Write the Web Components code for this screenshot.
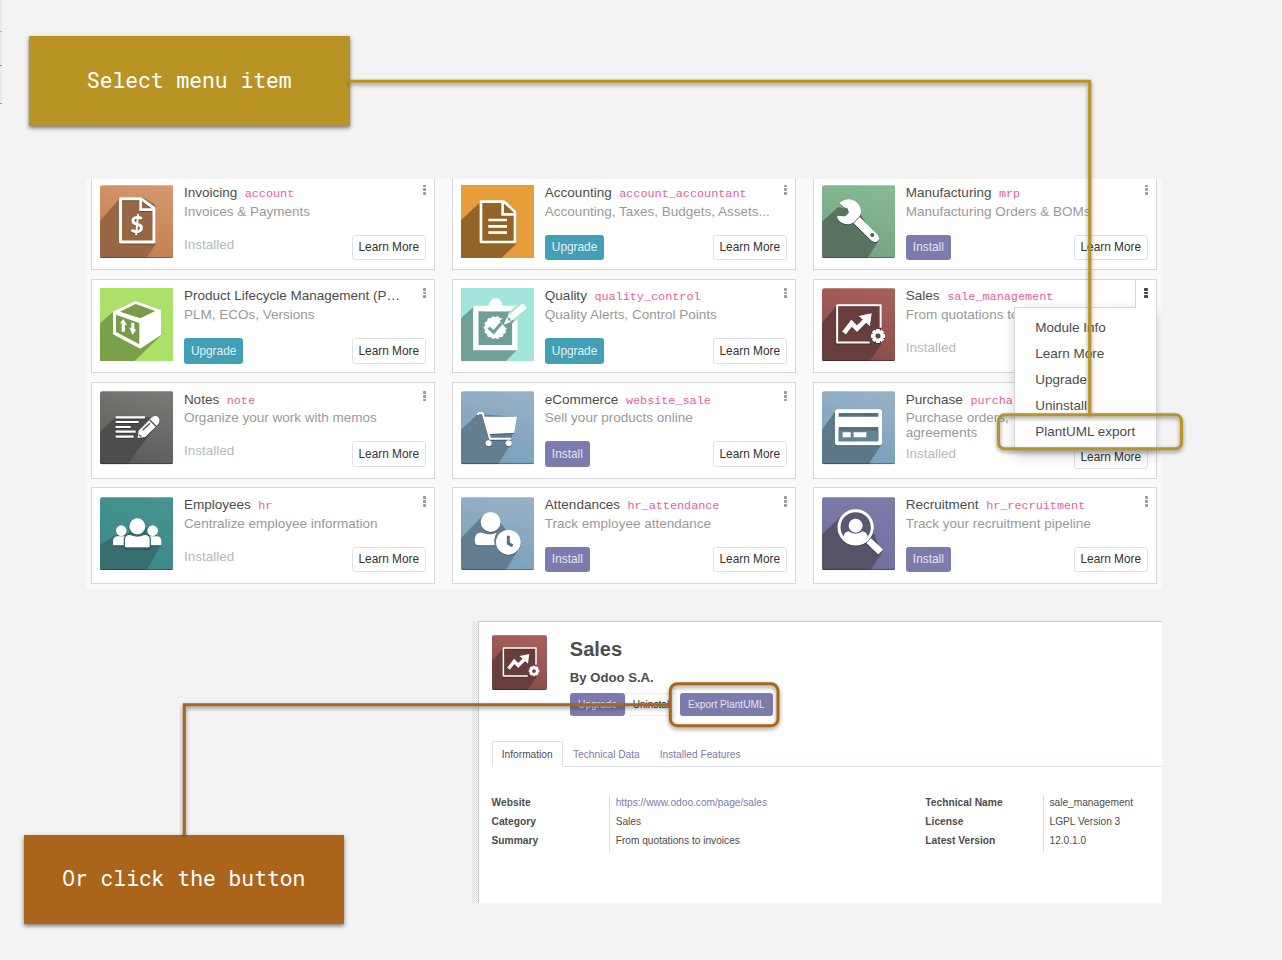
<!DOCTYPE html>
<html lang="en">
<head>
<meta charset="utf-8">
<title>Module export to PlantUML</title>
<style>
html,body{margin:0;padding:0}
body{width:1282px;height:960px;overflow:hidden;background:#f3f3f3;font-family:"Liberation Sans",Arial,sans-serif}
</style>
</head>
<body>
<guide-slide></guide-slide>
<script>
const define=(name,html)=>customElements.define(name,class extends HTMLElement{
  connectedCallback(){
    if(this.shadowRoot)return;
    const root=this.attachShadow({mode:'open'});
    const t=document.createElement('template');
    t.innerHTML=typeof html==='function'?html(this):html;
    root.append(t.content.cloneNode(true));
  }
});

/* Each glyph is drawn on a 220-unit tile: [top colour, bottom colour, shade colour, corner radius, shade path, symbol] */
const gear=(cx,cy,r)=>{let s='';for(let i=0;i<4;i++)s+=`<rect x="${cx-6}" y="${cy-r}" width="12" height="${2*r}" rx="2" transform="rotate(${i*45} ${cx} ${cy})"/>`;return s+`<circle cx="${cx}" cy="${cy}" r="${r*.75}"/>`};
const seal=(cx,cy,r)=>{let s=`<circle cx="${cx}" cy="${cy}" r="${r-2}"/>`;for(let i=0;i<14;i++){const a=i*Math.PI/7;s+=`<circle cx="${cx+Math.cos(a)*(r-4)}" cy="${cy+Math.sin(a)*(r-4)}" r="6"/>`}return s};
const icons={
invoice:['#d4986f','#c47e4c','#966543',8,'M59 39L0 109V220H138L166 180V60L128 36Z',
 `<path d="M61.500 41.500H124L162 70V171H61.500Z" fill="none" stroke="#fff" stroke-width="9" stroke-linejoin="round"/><path d="M122 41V74H162" fill="none" stroke="#fff" stroke-width="8"/><text x="111" y="143" font-family="Lato,sans-serif" font-weight="900" font-size="69" text-anchor="middle" fill="#fff">$</text>`],
ledger:['#e69d3a','#e69d3a','#8e6125',0,'M59 50L0 106V220H121L166 176V78L130 47Z',
 `<path d="M60 50H129L162 80V171H60Z" fill="none" stroke="#fff" stroke-width="8" stroke-linejoin="round"/><path d="M125 50V88H162M82 105H138M82 124H138M82 143H138" fill="none" stroke="#fff" stroke-width="8"/>`],
box:['#abe069','#abe069','#779c49',0,'M40 71L0 106V220H103L183 142Z',
 `<path d="M107 39L183 66V141L121 182L39 139V71Z" fill="#fff"/><path d="M107 48L166 69L121 91L60 71ZM48 80L118 105V169L48 132Z" fill="#779c49"/><path d="M70 93L81 111H75V131H65V106H60ZM98 141L88 119H94V104H103V124H109Z" fill="#fff"/>`],
quality:['#a1e4d9','#a1e4d9','#709d97',0,'M40 55L0 91V220H134L168 186V102L125 60Z',
 `<path d="M44.500 61.500H161.500V179H44.500Z" fill="#709d97" stroke="#fff" stroke-width="16"/><path d="M67 70Q82 62 85 47Q90 31 104 31Q118 31 123 47Q127 62 141 70Z" fill="#fff"/><path d="M60 54H82L66 72H53M126 54L143 72" fill="none"/><g fill="#fff">${seal(103,119,33)}</g><path d="M83 119L98 133L121 106" fill="none" stroke="#709d97" stroke-width="9"/><path d="M126 110L153 86" stroke="#709d97" stroke-width="30"/><path d="M150 89L188 55" stroke="#a1e4d9" stroke-width="32"/><path d="M145 92L192 53" stroke="#fff" stroke-width="19"/><path d="M138 88L150 102L128 110Z" fill="#fff"/><path d="M141 96L148 91" stroke="#709d97" stroke-width="5"/>`],
wrench:['#87bb94','#72a383','#59705f',8,'M48 66L0 110V220H136L168 171L110 80Z',
 `<path d="M54 55Q72 39 94 47Q112 55 115 75Q117 86 111 96L166 150Q174 160 167 167Q160 174 149 166L94 112Q80 121 62 113Q47 107 47 94L69 96L82 84L79 70L66 65Z" fill="#fff" stroke="#fff" stroke-width="3" stroke-linejoin="round"/><path d="M116 92L95 114" stroke="#59705f" stroke-width="3"/><circle cx="151" cy="150" r="6" fill="#4b6153"/>`],
sales:['#a8605c','#874d49','#653d3b',8,'M45 51L0 105V220H142L177 171V53Z',
 `<path d="M143 163.500H45.500V51.500H176V119" fill="none" stroke="#fff" stroke-width="6" stroke-linejoin="round"/><path d="M66 135L89 106L105 122L139 88" fill="none" stroke="#fff" stroke-width="14"/><path d="M110 84L149 76L144 115Z" fill="#fff"/><g fill="#fff">${gear(168,144,21)}</g><circle cx="168" cy="144" r="7.500" fill="#6a403e"/>`],
notes:['#787a76','#5c5d5a','#4c4c4b',8,'M48 77L0 122V220H83L180 87L136 77Z',
 `<path d="M47 79H135M47 93H116M47 108H92M47 122H107M47 137H101" stroke="#fff" stroke-width="6.500"/><path d="M113 141L116 119L153 82Q164 70 175 79Q183 90 173 101L136 138Z" fill="#fff"/><path d="M149 87L168 106M128 118L150 97M117 131L124 137" stroke="#4f504e" stroke-width="4"/>`],
people:['#48938f','#3a8989','#386d6e',8,'M43 116L0 144V220H140L184 141L151 90Z',
 `<g fill="#fff"><circle cx="64" cy="101" r="16"/><circle cx="158" cy="101" r="16"/><path d="M39 145V130Q42 116 56 118H168Q182 116 184 130V145Z"/></g><path d="M73 147V125Q77 108 94 113Q112 121 130 113Q147 108 151 125V147Q151 153 144 153H80Q73 153 73 147Z" fill="#fff" stroke="#386d6e" stroke-width="4"/><circle cx="112" cy="88" r="26" fill="#3a8080"/><circle cx="112" cy="88" r="24" fill="#fff"/>`],
cart:['#98b1c6','#78a1bd','#627b8e',8,'M50 70L0 116V220H111L150 157L163 77Z',
 `<path d="M50 72L53 67H65L87 143H151" fill="none" stroke="#fff" stroke-width="6"/><path d="M68 77H168L160 126L84 129Z" fill="#fff"/><circle cx="83" cy="157" r="9" fill="#fff"/><circle cx="143" cy="157" r="9" fill="#fff"/>`],
attendance:['#98b1c6','#78a1bd','#627b8e',8,'M68 53L0 123V220H134L177 150L116 74Z',
 `<path d="M41 128Q43 105 63 107Q89 118 107 107Q97 124 101 145H52Q41 145 41 128Z" fill="#fff"/><circle cx="89" cy="75" r="30" fill="#fff"/><circle cx="142" cy="136" r="37" fill="#fff"/><path d="M142 116V139L155 147" fill="none" stroke="#54707f" stroke-width="9"/>`],
card:['#98b1c6','#78a1bd','#5b7687',8,'M40 61L0 117V220H140L180 158V58Z',
 `<rect x="39" y="55" width="141" height="108" rx="8" fill="#fff"/><path d="M50 66H169V77H50ZM50 108H169V151H50Z" fill="#566f7d"/><path d="M50 120H169V151H50Z" fill="#648495"/><path d="M62 124H86V139H62ZM95 124H133V139H95Z" fill="#fff"/>`],
search:['#7e7ca9','#706e9c','#555267',8,'M62 53L0 112V220H145L179 170L139 63Z',
 `<circle cx="101" cy="91" r="50" fill="#5a5770" stroke="#fff" stroke-width="9"/><circle cx="101" cy="86" r="21" fill="#fff"/><path d="M64 122Q65 106 79 103Q100 117 122 103Q136 106 138 122Q104 155 64 122Z" fill="#fff"/><path d="M140 131L176 165" stroke="#fff" stroke-width="20"/>`]
};
let uid=0;
define('app-icon',el=>{
  const [a,b,shade,r,path,symbol]=icons[el.getAttribute('name')],id='g'+uid++;
  return `<style>:host{display:block;width:73.300px;height:73.300px;flex:none}svg{display:block;width:100%;height:100%}</style>
  <svg viewBox="0 0 220 220"><defs><linearGradient id="${id}" x1=".8" y1="0" x2=".5" y2="1"><stop stop-color="${a}"/><stop offset="1" stop-color="${b}"/></linearGradient><clipPath id="c${id}"><rect width="220" height="220" rx="${r}"/></clipPath></defs>
  <g clip-path="url(#c${id})"><rect width="220" height="220" fill="url(#${id})"/><path d="${path}" fill="${shade}" opacity=".95"/>${r?'<path d="M0 218H220" stroke="#000" stroke-opacity=".3" stroke-width="4"/><path d="M0 1H220" stroke="#fff" stroke-opacity=".25" stroke-width="4"/>':''}</g>
  <g ${r?'style="filter:drop-shadow(0 3px 1px rgba(0,0,0,.3))"':''}>${symbol}</g></svg>`;
});

define('ui-button',`<style>
:host{display:inline-flex;align-items:center;justify-content:center;box-sizing:border-box;height:25.500px;padding:1.500px 6px 0;border-radius:2.500px;border:1px solid #dee2e6;background:#fff;color:#333;font-size:11.850px;line-height:1;white-space:nowrap}
:host([kind=upgrade]){background:#439fb6;border-color:#439fb6;color:#e2f1f4}
:host([kind=install]){background:#7c7bad;border-color:#7c7bad;color:#e4e4ef}
:host([small]){height:23.500px;padding:1.500px 7.300px 0;font-size:10.150px}
</style><slot></slot>`);

define('kebab-dots',`<style>:host{display:flex;flex-direction:column;gap:1px;width:3.500px}i{height:2.800px;background:var(--dot,#999);border-radius:.8px}</style><i></i><i></i><i></i>`);

define('drop-menu',`<style>
:host{display:flex;flex-direction:column;box-sizing:border-box;width:143.500px;height:144px;padding:6.500px 0 0 20.500px;background:#fff;border:1px solid #d5dae0;font-size:13.500px;color:#4c4c4c;box-shadow:0 5px 12px rgba(0,0,0,.17)}
::slotted(span){line-height:26.100px;height:26.100px;white-space:nowrap}
</style><slot></slot>`);

define('module-card',el=>{
 const g=n=>el.getAttribute(n)||'',s=g('state'),open=el.hasAttribute('open');
 return `<style>
:host{display:flex;position:relative;box-sizing:border-box;min-width:0;border:1px solid #d3d8dd;background:#fff;padding:8.300px 8.200px 0 8.200px;gap:10.400px}
.body{flex:1;min-width:0}
header{display:flex;align-items:baseline;height:18px;line-height:18px;margin-top:-.7px;font-size:13.500px;color:#4c4c4c;white-space:nowrap}
code{margin-left:7.500px;font-family:"Liberation Mono",monospace;font-size:11.800px;color:#e4609f}
p{margin:2.700px 0 0;font-size:13.500px;line-height:14.500px;min-height:26.500px;color:#999;width:${g('wrap')?'125px':'auto'}}
footer{display:flex;justify-content:space-between;align-items:flex-start;margin-top:3.600px}
.state{font-size:13.500px;line-height:20.400px;color:#b3b9bf}
.dots{position:absolute;right:8px;top:8px}
.open{right:0;top:0;width:20px;height:28px;border-left:1px solid #d3d8dd;--dot:#444;background:#fff;z-index:3}
.open kebab-dots{margin:8px 0 0 8px}
drop-menu{position:absolute;right:-1px;top:27.500px;z-index:2}
</style><app-icon name="${g('icon')}"></app-icon>
<div class="body"><header><span>${g('name')}</span>${g('code')?`<code>${g('code')}</code>`:''}</header><p>${g('text')}</p>
<footer>${s==='Installed'?`<span class="state">${s}</span>`:`<ui-button kind="${s.toLowerCase()}">${s}</ui-button>`}${open?'':'<ui-button>Learn More</ui-button>'}</footer></div>
<div class="dots ${open?'open':''}"><kebab-dots></kebab-dots></div>
${open?'<drop-menu><span>Module Info</span><span>Learn More</span><span>Upgrade</span><span>Uninstall</span><span>PlantUML export</span></drop-menu>':''}`;
});

const modules=[
['Invoicing','account','Invoices &amp; Payments','Installed','invoice'],
['Accounting','account_accountant','Accounting, Taxes, Budgets, Assets...','Upgrade','ledger'],
['Manufacturing','mrp','Manufacturing Orders &amp; BOMs','Install','wrench'],
['Product Lifecycle Management (P…','','PLM, ECOs, Versions','Upgrade','box'],
['Quality','quality_control','Quality Alerts, Control Points','Upgrade','quality'],
['Sales','sale_management','From quotations to','Installed','sales','open style="z-index:2"'],
['Notes','note','Organize your work with memos','Installed','notes'],
['eCommerce','website_sale','Sell your products online','Install','cart'],
['Purchase','purcha','Purchase orders, agreements','Installed','card','wrap="1"'],
['Employees','hr','Centralize employee information','Installed','people'],
['Attendances','hr_attendance','Track employee attendance','Install','attendance'],
['Recruitment','hr_recruitment','Track your recruitment pipeline','Install','search']];
define('module-board',`<style>
:host{display:block;box-sizing:border-box;width:1076px;height:409.500px;overflow:hidden;background:#f9f9f9;padding:0 5px}
.grid{display:grid;margin-top:-3.500px;grid-template-columns:repeat(3,344.300px);grid-template-rows:94.500px 94.500px 96.500px 96.500px;column-gap:16.700px;row-gap:8.800px}
</style><div class="grid">${modules.map(m=>`<module-card name="${m[0]}" code="${m[1]}" text="${m[2]}" state="${m[3]}" icon="${m[4]}" ${m[5]||''}></module-card>`).join('')}</div>`);

define('info-table',`<style>
:host{display:grid;grid-template-columns:117.700px auto;grid-template-rows:57px;font-size:10.170px;line-height:19px;color:#4c4c4c}
.k{font-weight:bold;font-size:10.250px}.v{border-left:1px solid #ddd;padding-left:5.500px}
::slotted(*){display:block;white-space:nowrap;position:relative;top:-1.200px}
</style><div class="k"><slot name="k"></slot></div><div class="v"><slot name="v"></slot></div>`);

define('module-form',`<style>
:host{display:flex;width:690px;height:282px;overflow:hidden}
.edge{width:6px;background:repeating-conic-gradient(#e2e2e2 0 25%,#f3f3f3 0 50%) 0 0/2px 2px}
.sheet{flex:1;box-sizing:border-box;background:#fff;border-left:1px solid #c8c8d3;border-top:1px solid #c8c8d3;padding:12.500px 0 0 12.500px}
.top{display:flex;gap:23.300px;height:106.500px}
app-icon{width:55px;height:55px}
h1{margin:1.500px 0 0;font-size:20px;line-height:26px;color:#4c4c4c}
h2{margin:6px 0 0;font-size:13.150px;line-height:20px;color:#4c4c4c}
.buttons{display:flex;margin-top:4.500px}
.buttons ui-button:nth-child(2){border-color:#eee;width:52px;padding-left:9px}
.buttons ui-button:nth-child(3){margin-left:2.500px}
nav{display:flex;height:26px;box-sizing:border-box;border-bottom:1px solid #dee2e6;font-size:10.180px;line-height:27px;color:#7c7bad}
nav span{padding:0 10px;white-space:nowrap}
nav .on{box-sizing:border-box;height:26px;line-height:25px;padding:0 9.300px;border:1px solid #dee2e6;border-bottom-color:#fff;border-radius:2px 2px 0 0;background:#fff;color:#4c4c4c}
.data{display:grid;grid-template-columns:433.800px auto;margin-top:27.500px}
</style><div class="edge"></div><div class="sheet">
<div class="top"><app-icon name="sales"></app-icon><div><h1>Sales</h1><h2>By Odoo S.A.</h2><div class="buttons"><ui-button small kind="install">Upgrade</ui-button><ui-button small>Uninstall</ui-button><ui-button small kind="install">Export PlantUML</ui-button></div></div></div>
<nav><span class="on">Information</span><span>Technical Data</span><span>Installed Features</span></nav>
<div class="data"><info-table><span slot="k">Website</span><span slot="v" style="color:#7c7bad">https://www.odoo.com/page/sales</span><span slot="k">Category</span><span slot="v">Sales</span><span slot="k">Summary</span><span slot="v">From quotations to invoices</span></info-table>
<info-table><span slot="k">Technical Name</span><span slot="v">sale_management</span><span slot="k">License</span><span slot="v">LGPL Version 3</span><span slot="k">Latest Version</span><span slot="v">12.0.1.0</span></info-table></div></div>`);

define('call-out',`<style>
:host{display:flex;align-items:center;justify-content:center;box-sizing:border-box;width:320.500px;height:90px;padding-bottom:3px;color:#fff;font:21.330px "Roboto Mono","Liberation Mono",monospace;white-space:pre;box-shadow:0 2px 4px rgba(0,0,0,.5)}
</style><slot></slot>`);

define('guide-slide',`<style>
:host{display:block;position:relative;box-sizing:border-box;width:1282px;height:960px;overflow:hidden;padding:179px 0 0 86px}
module-form{margin:32.500px 0 0 386px}
call-out{position:absolute}
.gold{left:29px;top:36px;background:#b99425}
.rust{left:23.500px;top:834.500px;height:89.500px;background:#ab651b}
.lines{position:absolute;inset:0;z-index:6;filter:drop-shadow(0 2px 2px rgba(0,0,0,.45))}
.edge{position:absolute;left:0;top:0;width:2px;height:104px;background:linear-gradient(#aaa,#aaa) 0 31px/2px 1px no-repeat,linear-gradient(#888,#888) 0 65px/2px 1px no-repeat,linear-gradient(#999,#999) 0 103px/2px 1px no-repeat,#e9e9e9}
</style>
<div class="edge"></div>
<module-board></module-board>
<module-form></module-form>
<call-out class="gold">Select menu item</call-out>
<call-out class="rust">Or click the button</call-out>
<svg class="lines" width="1282" height="960" fill="none" stroke-width="3">
<g stroke="#b99425"><path d="M349 81.300H1089.700V415"/><rect x="998.500" y="414.800" width="183" height="34" rx="6"/></g>
<g stroke="#ab651b"><path d="M184.300 835V704.800H670"/><rect x="670.300" y="683.800" width="107.700" height="42" rx="7"/></g></svg>`);
</script>
</body>
</html>
